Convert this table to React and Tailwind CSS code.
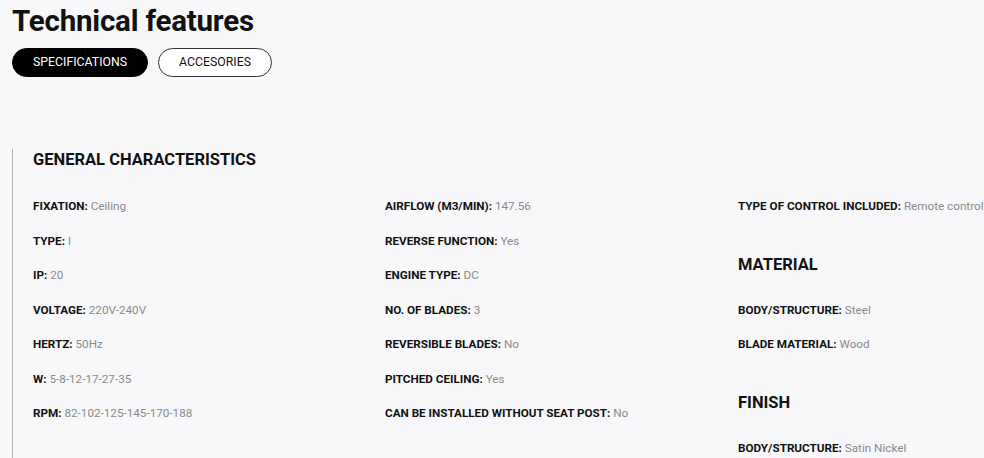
import React from 'react';

const general = [
    ['FIXATION', 'Ceiling'],
    ['TYPE', 'I'],
    ['IP', '20'],
    ['VOLTAGE', '220V-240V'],
    ['HERTZ', '50Hz'],
    ['W', '5-8-12-17-27-35'],
    ['RPM', '82-102-125-145-170-188'],
];

const general2 = [
    ['AIRFLOW (M3/MIN)', '147.56'],
    ['REVERSE FUNCTION', 'Yes'],
    ['ENGINE TYPE', 'DC'],
    ['NO. OF BLADES', '3'],
    ['REVERSIBLE BLADES', 'No'],
    ['PITCHED CEILING', 'Yes'],
    ['CAN BE INSTALLED WITHOUT SEAT POST', 'No'],
];

const Item = ({ label, value }) => (
    <div className="h-[34.5px] flex items-center whitespace-nowrap text-[11.7px] leading-[14px]">
        <span className="font-bold text-[#111]">{label}:</span>
        <span className="text-[#8a8a8a]">&nbsp;{value}</span>
    </div>
);

const SubHeading = ({ children }) => (
    <div className="h-[69px] pt-[31px]">
        <h4 className="text-[16.5px] leading-[20px] font-bold text-[#111]">{children}</h4>
    </div>
);

const App = () => {
    return (
        <div className="w-full h-[458px] overflow-hidden bg-[#f8f8fa] font-['Roboto',sans-serif]">
            <div className="px-3 pt-[4px]">
                <h2 className="text-[29.5px] leading-[34px] font-bold text-[#111] tracking-[-0.2px]">Technical features</h2>
                <div className="flex gap-[10px] mt-[10px]">
                    <button className="h-[29px] px-[20px] rounded-full bg-black text-white text-[12.3px] border border-black">SPECIFICATIONS</button>
                    <button className="h-[29px] px-[20px] rounded-full bg-white text-[#111] text-[12.3px] border border-[#333]">ACCESORIES</button>
                </div>
            </div>

            <div className="ml-3 mt-[72px] border-l border-[#b5b5b5] pl-[20px]">
                <h3 className="text-[16.5px] leading-[20px] font-bold text-[#111] pt-[1px]">GENERAL CHARACTERISTICS</h3>
                <div className="grid grid-cols-[352px_353px_352px] mt-[19px]">
                    <div className="flex flex-col">
                        {general.map(([l, v]) => <Item key={l} label={l} value={v} />)}
                    </div>
                    <div className="flex flex-col">
                        {general2.map(([l, v]) => <Item key={l} label={l} value={v} />)}
                    </div>
                    <div className="flex flex-col">
                        <Item label="TYPE OF CONTROL INCLUDED" value="Remote control" />
                        <SubHeading>MATERIAL</SubHeading>
                        <Item label="BODY/STRUCTURE" value="Steel" />
                        <Item label="BLADE MATERIAL" value="Wood" />
                        <SubHeading>FINISH</SubHeading>
                        <Item label="BODY/STRUCTURE" value="Satin Nickel" />
                    </div>
                </div>
            </div>
        </div>
    );
};

export default App;
